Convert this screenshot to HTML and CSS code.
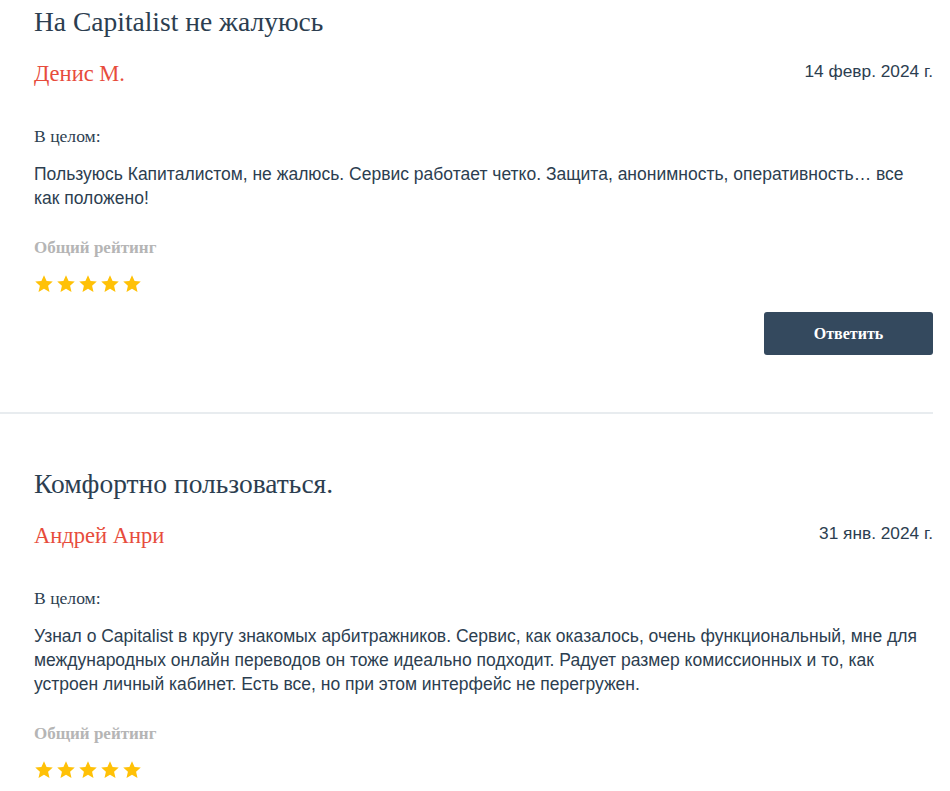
FILE: index.html
```html
<!DOCTYPE html>
<html lang="ru">
<head>
<meta charset="utf-8">
<title>Отзывы</title>
<link rel="stylesheet" href="styles.css">
</head>
<body>
<div class="reviews">
  <article class="review">
    <h2 class="review-title">На Capitalist не жалуюсь</h2>
    <div class="review-meta">
      <span class="author">Денис М.</span>
      <span class="date">14 февр. 2024 г.</span>
    </div>
    <div class="label">В целом:</div>
    <p class="text">Пользуюсь Капиталистом, не жалюсь. Сервис работает четко. Защита, анонимность, оперативность… все как положено!</p>
    <div class="rating-label">Общий рейтинг</div>
    <div class="stars">
      <svg class="star" viewBox="0 0 24 24"><path d="M12 1.5l3.1 6.9 7.4.7-5.6 5 1.7 7.4L12 17.6l-6.6 3.9 1.7-7.4-5.6-5 7.4-.7z"/></svg>
      <svg class="star" viewBox="0 0 24 24"><path d="M12 1.5l3.1 6.9 7.4.7-5.6 5 1.7 7.4L12 17.6l-6.6 3.9 1.7-7.4-5.6-5 7.4-.7z"/></svg>
      <svg class="star" viewBox="0 0 24 24"><path d="M12 1.5l3.1 6.9 7.4.7-5.6 5 1.7 7.4L12 17.6l-6.6 3.9 1.7-7.4-5.6-5 7.4-.7z"/></svg>
      <svg class="star" viewBox="0 0 24 24"><path d="M12 1.5l3.1 6.9 7.4.7-5.6 5 1.7 7.4L12 17.6l-6.6 3.9 1.7-7.4-5.6-5 7.4-.7z"/></svg>
      <svg class="star" viewBox="0 0 24 24"><path d="M12 1.5l3.1 6.9 7.4.7-5.6 5 1.7 7.4L12 17.6l-6.6 3.9 1.7-7.4-5.6-5 7.4-.7z"/></svg>
    </div>
    <div class="actions"><button class="reply">Ответить</button></div>
  </article>
  <article class="review">
    <h2 class="review-title">Комфортно пользоваться.</h2>
    <div class="review-meta">
      <span class="author">Андрей Анри</span>
      <span class="date">31 янв. 2024 г.</span>
    </div>
    <div class="label">В целом:</div>
    <p class="text">Узнал о Capitalist в кругу знакомых арбитражников. Сервис, как оказалось, очень функциональный, мне для международных онлайн переводов он тоже идеально подходит. Радует размер комиссионных и то, как устроен личный кабинет. Есть все, но при этом интерфейс не перегружен.</p>
    <div class="rating-label">Общий рейтинг</div>
    <div class="stars">
      <svg class="star" viewBox="0 0 24 24"><path d="M12 1.5l3.1 6.9 7.4.7-5.6 5 1.7 7.4L12 17.6l-6.6 3.9 1.7-7.4-5.6-5 7.4-.7z"/></svg>
      <svg class="star" viewBox="0 0 24 24"><path d="M12 1.5l3.1 6.9 7.4.7-5.6 5 1.7 7.4L12 17.6l-6.6 3.9 1.7-7.4-5.6-5 7.4-.7z"/></svg>
      <svg class="star" viewBox="0 0 24 24"><path d="M12 1.5l3.1 6.9 7.4.7-5.6 5 1.7 7.4L12 17.6l-6.6 3.9 1.7-7.4-5.6-5 7.4-.7z"/></svg>
      <svg class="star" viewBox="0 0 24 24"><path d="M12 1.5l3.1 6.9 7.4.7-5.6 5 1.7 7.4L12 17.6l-6.6 3.9 1.7-7.4-5.6-5 7.4-.7z"/></svg>
      <svg class="star" viewBox="0 0 24 24"><path d="M12 1.5l3.1 6.9 7.4.7-5.6 5 1.7 7.4L12 17.6l-6.6 3.9 1.7-7.4-5.6-5 7.4-.7z"/></svg>
    </div>
    <div class="actions"><button class="reply">Ответить</button></div>
  </article>
</div>
</body>
</html>
```
FILE: styles.css
```css
html, body {
  margin: 0;
  padding: 0;
  background: #fff;
}
body {
  font-family: "Liberation Serif", "Times New Roman", serif;
  color: #2c3e50;
}
.reviews {
  width: 933px;
}
.review {
  padding: 5px 0 57px 34px;
  border-bottom: 2px solid #e8ecef;
  margin-bottom: 48px;
}
.review-title {
  margin: 0;
  font-weight: normal;
  font-size: 27.5px;
  line-height: 34px;
  color: #2c3e50;
}
.review-meta {
  display: flex;
  justify-content: space-between;
  align-items: flex-start;
  margin-top: 21px;
}
.author {
  font-size: 22.5px;
  line-height: 28px;
  color: #e74c3c;
}
.date {
  font-family: "Liberation Sans", Arial, sans-serif;
  font-size: 17.3px;
  line-height: 20px;
  margin-top: 1px;
  color: #2c3e50;
}
.label {
  margin-top: 37px;
  font-size: 17.6px;
  line-height: 22px;
  color: #2c3e50;
}
.text {
  margin: 15px 0 0;
  font-family: "Liberation Sans", Arial, sans-serif;
  font-size: 17.5px;
  line-height: 24px;
  color: #2c3e50;
}
.rating-label {
  margin-top: 27px;
  font-size: 17px;
  font-weight: bold;
  line-height: 22px;
  color: #b5b5b5;
}
.stars {
  display: flex;
  gap: 2px;
  margin-top: 15px;
}
.star {
  width: 20px;
  height: 20px;
  fill: #ffc107;
}
.actions {
  display: flex;
  justify-content: flex-end;
  margin-top: 18px;
}
.reply {
  width: 169px;
  height: 43px;
  border: none;
  border-radius: 3px;
  background: #34495e;
  color: #fff;
  font-family: "Liberation Serif", "Times New Roman", serif;
  font-size: 16px;
  font-weight: bold;
  cursor: pointer;
}
```
